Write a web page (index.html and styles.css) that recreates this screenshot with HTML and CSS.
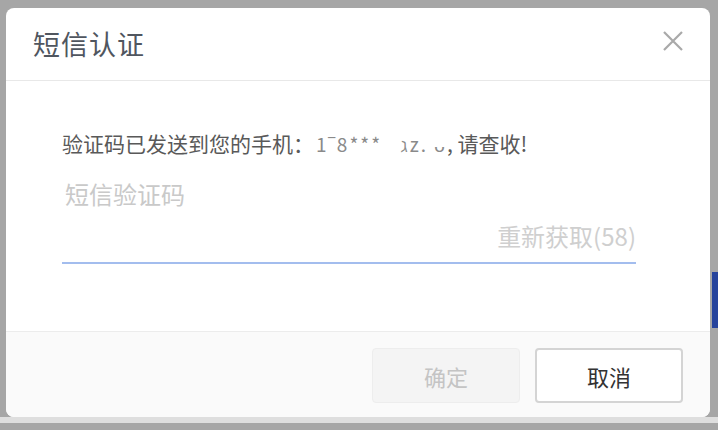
FILE: index.html
```html
<!DOCTYPE html>
<html lang="zh-CN">
<head>
  <meta charset="UTF-8" />
  <title>短信认证</title>
  <link rel="stylesheet" href="styles.css">
</head>
<body>
  <div class="page-edge"></div>
  <div class="mask">
    <div class="dialog">
      <div class="dialog-header">
        <span class="dialog-title">短信认证</span>
        <svg class="dialog-close" width="22" height="22" viewBox="0 0 22 22">
          <path d="M2 2 L20 20 M20 2 L2 20" stroke="#a9a9a9" stroke-width="2.2" fill="none" />
        </svg>
      </div>

      <div class="dialog-body">
        <p class="tip">验证码已发送到您的手机：<span class="phone">1‾8***&nbsp;&nbsp;&nbsp;ℷz. ᴗ</span>, 请查收!</p>
        <div class="code-field">
          <input type="text" class="code-input" placeholder="短信验证码" />
          <div class="resend"><span>重新获取(58)</span></div>
        </div>
      </div>

      <div class="dialog-footer">
        <button type="button" class="btn btn-ok" disabled>确定</button>
        <button type="button" class="btn btn-cancel">取消</button>
      </div>
    </div>
  </div>
</body>
</html>
```

FILE: styles.css
```css
html, body {
  margin: 0;
  height: 430px;
  overflow: hidden;
}

body {
  position: relative;
  background: #a6a6a6;
  font-family: "Noto Sans CJK SC", "Liberation Sans", sans-serif;
  color: #555;
}

/* the blue bit of the page behind the mask */
.page-edge {
  position: absolute;
  left: 712px;
  top: 272px;
  width: 6px;
  height: 56px;
  background: #27449c;
}

.mask {
  position: relative;
  height: 417px;
  padding: 8px 8px 0 6px;
  box-sizing: border-box;
  border-bottom: 8px solid #a6a6a6;
  box-shadow: 0 6px 0 #dedede;
}

.dialog {
  width: 704px;
  height: 409px;
  background: #fff;
  border-radius: 8px;
  overflow: hidden;
  display: flex;
  flex-direction: column;
}

.dialog-header {
  height: 72px;
  flex: none;
  display: flex;
  align-items: center;
  justify-content: space-between;
  padding: 0 26px 0 27px;
  border-bottom: 1px solid #e8e8e8;
}

.dialog-title {
  font-size: 27px;
  color: #50565f;
  letter-spacing: 1px;
  margin-top: -2px;
}

.dialog-close {
  display: block;
  margin-top: -6px;
}

.dialog-body {
  flex: 1;
  padding: 48px 74px 0 56px;
}

.tip {
  margin: 0 0 19px;
  font-size: 21px;
  line-height: 28px;
  color: #595959;
}

.phone {
  color: #8a8a8a;
  font-size: 19px;
  letter-spacing: 2px;
  padding-left: 2px;
}

.code-field {
  border-bottom: 2px solid #a3bdee;
  padding-bottom: 10px;
}

.code-input {
  display: block;
  width: 100%;
  height: 32px;
  border: none;
  padding: 0 0 0 3px;
  margin: 0 0 11px;
  font-family: inherit;
  font-size: 24px;
  background: transparent;
  outline: none;
}

.code-input::placeholder {
  color: #c9c9c9;
}

.resend {
  text-align: right;
  font-size: 24px;
  line-height: 32px;
  color: #cfcfcf;
}

.dialog-footer {
  height: 86px;
  flex: none;
  box-sizing: border-box;
  background: #fafafa;
  border-top: 1px solid #ececec;
  display: flex;
  justify-content: flex-end;
  gap: 15px;
  padding: 16px 27px 0 0;
}

.btn {
  width: 148px;
  height: 55px;
  border-radius: 4px;
  font-family: inherit;
  font-size: 22px;
  cursor: pointer;
}

.btn-ok {
  background: #f4f4f4;
  border: 1px solid #ededed;
  color: #c4c4c4;
  cursor: default;
}

.btn-cancel {
  background: #fff;
  border: 2px solid #d4d4d4;
  color: #333;
}
```
